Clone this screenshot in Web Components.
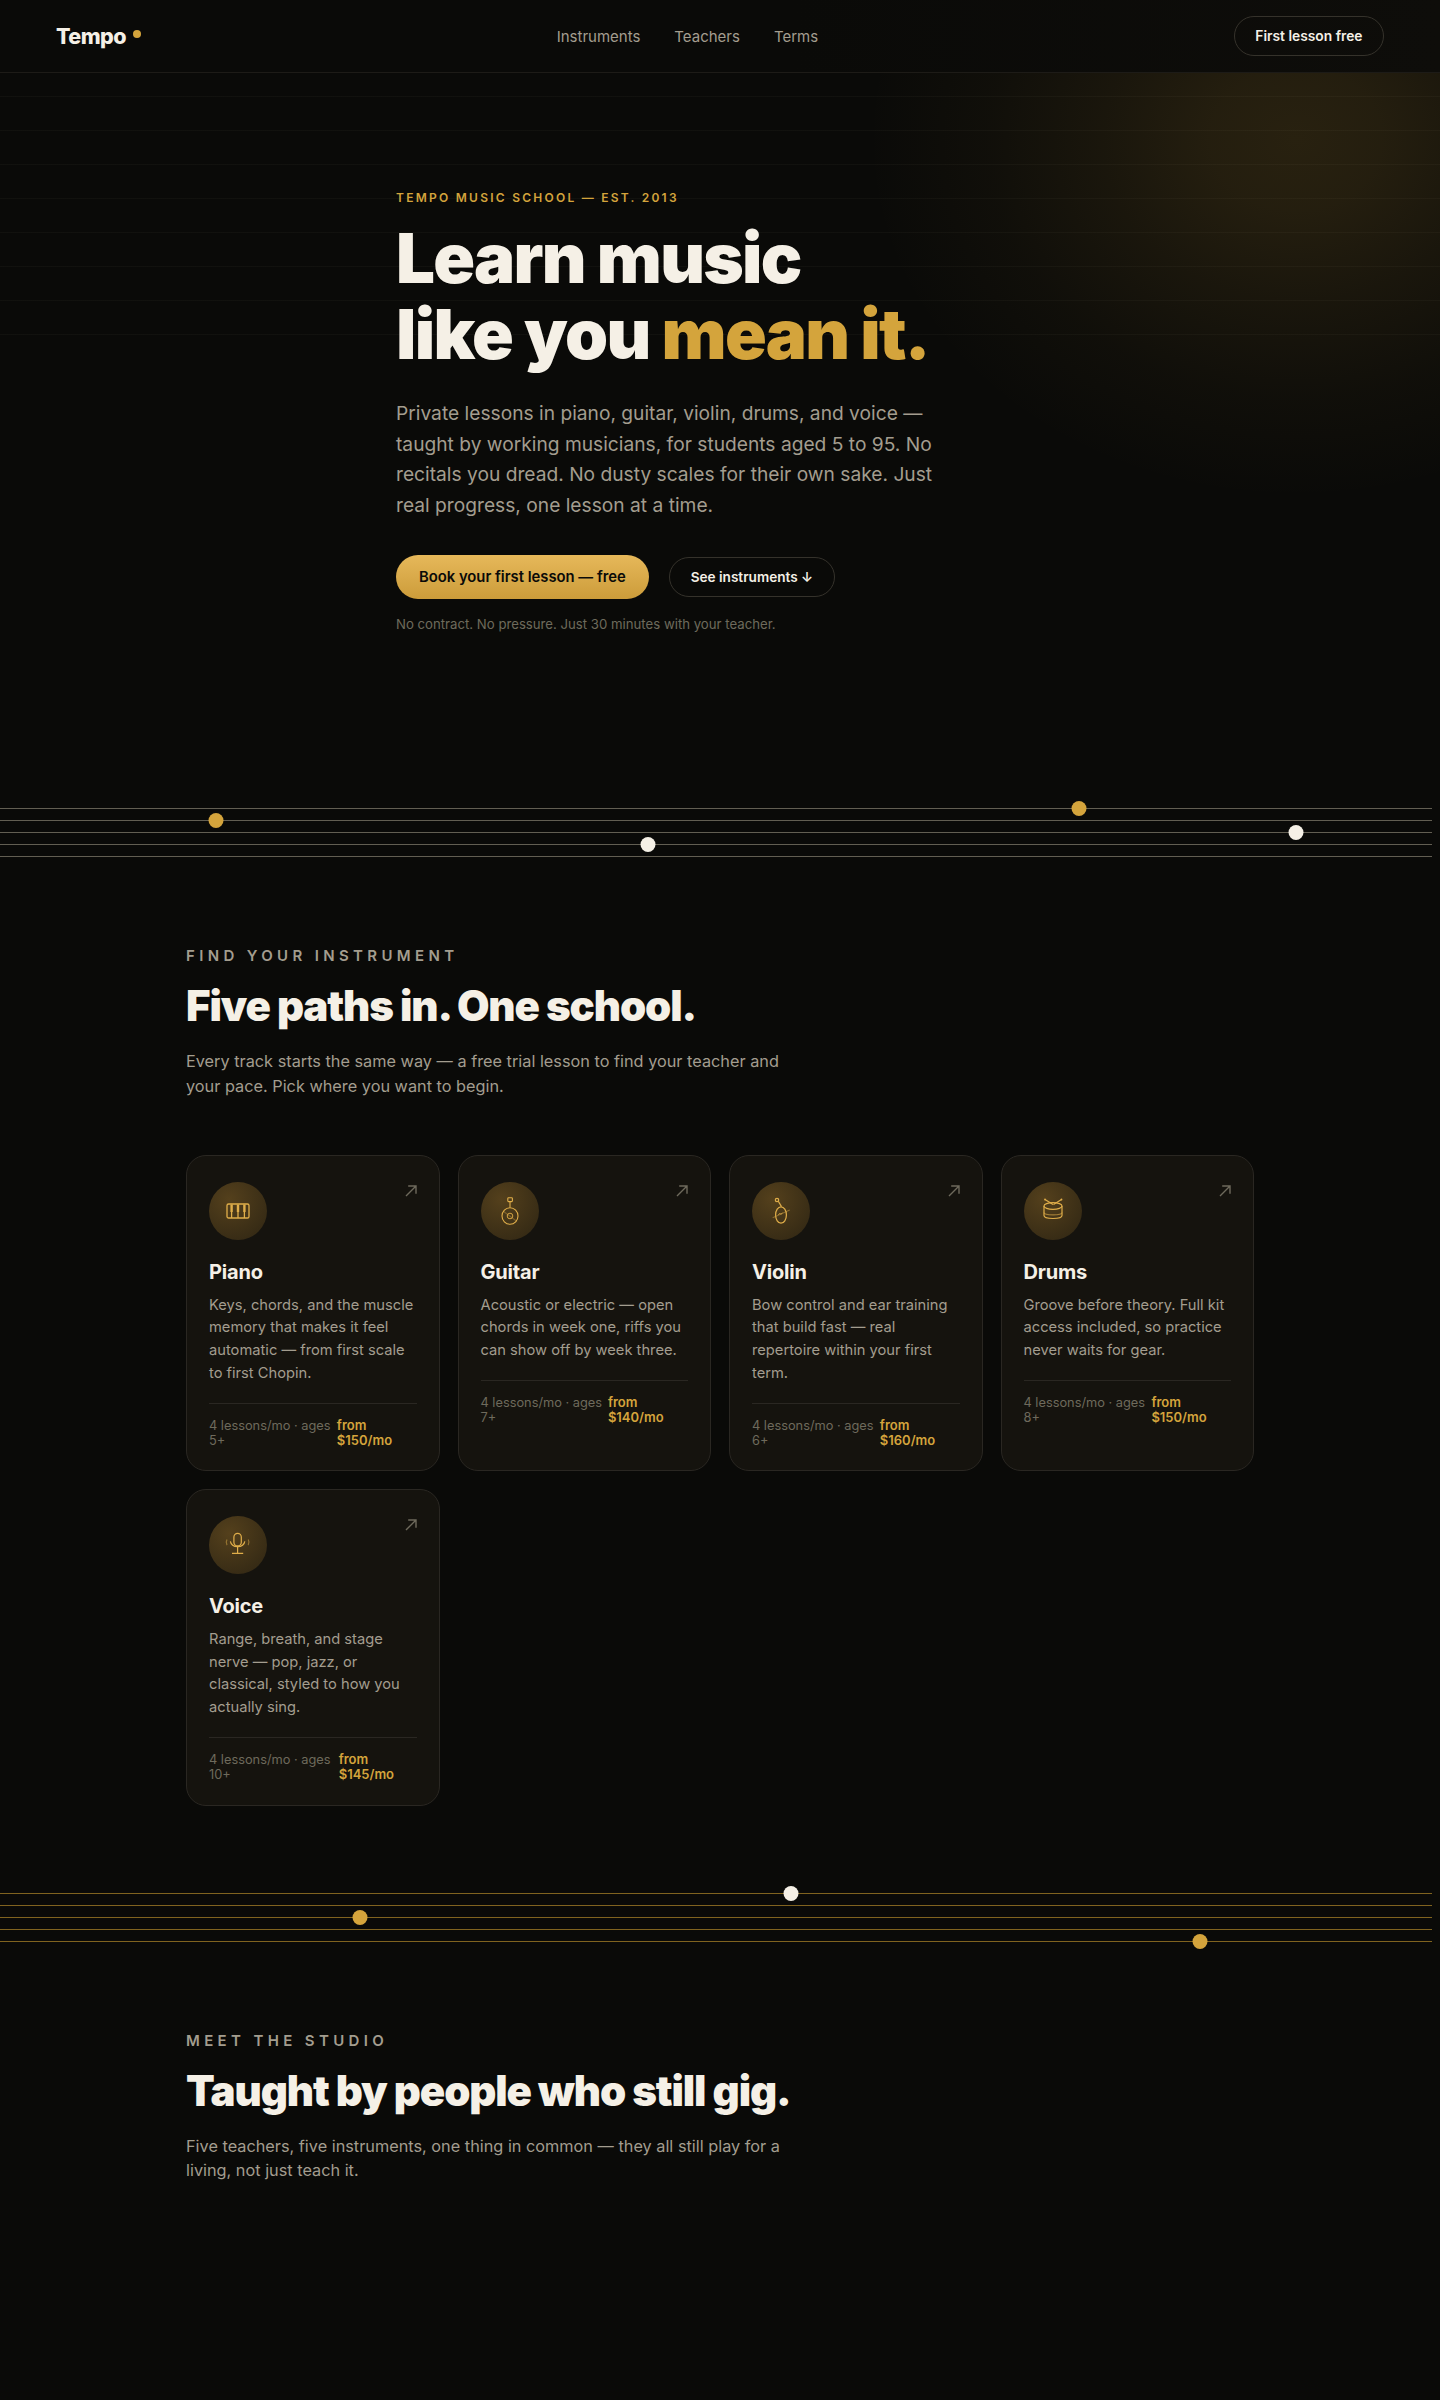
<!DOCTYPE html>
<html lang="en">
<head>
<meta charset="utf-8">
<title>Tempo</title>
<style>
  html, body { margin: 0; background: #0a0a08; }
  body { font-family: Inter, "Liberation Sans", sans-serif; color: #f5f0e6; min-height: 2400px; }
</style>
</head>
<body>
<tempo-nav>
  <a slot="links">Instruments</a>
  <a slot="links">Teachers</a>
  <a slot="links">Terms</a>
</tempo-nav>

<tempo-hero></tempo-hero>

<staff-divider dots="216,1,gold 648,3,cream 1079,0,gold 1296,2,cream" line="#625e52"></staff-divider>

<tempo-section eyebrow="FIND YOUR INSTRUMENT" heading="Five paths in. One school.">
  Every track starts the same way — a free trial lesson to find your teacher and your pace. Pick where you want to begin.
  <instrument-grid slot="body">
    <instrument-card name="Piano" meta="4 lessons/mo · ages 5+" price="from $150/mo">
      <svg slot="icon" width="28" height="28" viewBox="0 0 28 28" fill="none" stroke="#e0ae4a" stroke-width="1.3">
        <rect x="3" y="7" width="22" height="14" rx="1.6"/>
        <path d="M7.6 15v6M14 15v6M20.4 15v6"/>
        <path d="M6.4 7.5h2.4v7.5H6.4zM12.8 7.5h2.4v7.5h-2.4zM19.2 7.5h2.4v7.5h-2.4z" fill="#e0ae4a" stroke="none"/>
      </svg>
      Keys, chords, and the muscle memory that makes it feel automatic — from first scale to first Chopin.
    </instrument-card>
    <instrument-card name="Guitar" meta="4 lessons/mo · ages 7+" price="from $140/mo">
      <svg slot="icon" width="28" height="28" viewBox="0 0 28 28" fill="none" stroke="#e0ae4a" stroke-width="1.1">
        <rect x="11.8" y="0.8" width="4.6" height="3.8" rx="0.8"/>
        <path d="M14 4.6V10.5"/>
        <ellipse cx="14" cy="19" rx="8" ry="8.3"/>
        <circle cx="14" cy="19" r="2.8" stroke-width=".9"/>
        <path d="M7 14l14 10.5" stroke-opacity=".35"/>
      </svg>
      Acoustic or electric — open chords in week one, riffs you can show off by week three.
    </instrument-card>
    <instrument-card name="Violin" meta="4 lessons/mo · ages 6+" price="from $160/mo">
      <svg slot="icon" width="28" height="28" viewBox="0 0 28 28" fill="none" stroke="#e0ae4a" stroke-width="1.2">
        <circle cx="10" cy="3" r="1.7"/>
        <path d="M11.3 4.2L14.5 9.6"/>
        <ellipse cx="14" cy="18" rx="5.4" ry="8.2"/>
        <path d="M11.5 17.5c.8-.2 1-1.2 1.5-1s.3 1 1 .8 .7-1.2 1.4-1.2" stroke-width=".9"/>
        <path d="M5.7 20.7L22.7 13" stroke-opacity=".45"/>
      </svg>
      Bow control and ear training that build fast — real repertoire within your first term.
    </instrument-card>
    <instrument-card name="Drums" meta="4 lessons/mo · ages 8+" price="from $150/mo">
      <svg slot="icon" width="28" height="28" viewBox="0 0 28 28" fill="none" stroke="#e0ae4a" stroke-width="1.2">
        <ellipse cx="14" cy="9" rx="9" ry="3.3"/>
        <path d="M5 9v9.5c0 2 4 3 9 3s9-1 9-3V9"/>
        <path d="M5 15.5c0 1.6 4 2.4 9 2.4s9-.8 9-2.4" stroke-opacity=".6"/>
        <path d="M6 2.5l8 5M22.5 2.5l-8 5"/>
        <circle cx="6" cy="2.5" r=".9" fill="#e0ae4a" stroke="none"/>
        <circle cx="22.5" cy="2.5" r=".9" fill="#e0ae4a" stroke="none"/>
      </svg>
      Groove before theory. Full kit access included, so practice never waits for gear.
    </instrument-card>
    <instrument-card name="Voice" meta="4 lessons/mo · ages 10+" price="from $145/mo">
      <svg slot="icon" width="28" height="28" viewBox="0 0 28 28" fill="none" stroke="#e0ae4a" stroke-width="1.2">
        <rect x="9.9" y="2.3" width="7.4" height="12.6" rx="3.7"/>
        <path d="M6.4 10.3c.6 3.4 3.4 5.3 7.2 5.3s6.6-1.9 7.2-5.3"/>
        <path d="M13.6 15.6V22.3M8 22.3h11.2"/>
        <path d="M3 8.5c-1.2 2-1.2 3.6 0 5.6M24.2 8.5c1.2 2 1.2 3.6 0 5.6" stroke-opacity=".5"/>
      </svg>
      Range, breath, and stage nerve — pop, jazz, or classical, styled to how you actually sing.
    </instrument-card>
  </instrument-grid>
</tempo-section>

<staff-divider dots="360,2,gold 791,0,cream 1200,4,gold" line="#80631f"></staff-divider>

<tempo-section eyebrow="MEET THE STUDIO" heading="Taught by people who still gig.">
  Five teachers, five instruments, one thing in common — they all still play for a living, not just teach it.
</tempo-section>

<script>
class TempoNav extends HTMLElement {
  constructor() {
    super();
    this.attachShadow({ mode: 'open' });
    this.shadowRoot.innerHTML = `
      <style>
        :host { display: flex; justify-content: space-between; align-items: center; height: 72px;
          padding: 0 56px; border-bottom: 1px solid #1d1b17; position: relative; z-index: 2;
          background: linear-gradient(90deg, #0a0a08 55%, #0e0d0a 100%); }
        .logo { font-size: 21.5px; font-weight: 800; letter-spacing: -.025em; color: #f5f0e6; display: flex; align-items: center; gap: 7px; }
        .logo i { width: 8px; height: 8px; border-radius: 50%; background: #d4a43c; margin-top: -5px; }
        nav { display: flex; gap: 34px; font-size: 15px; color: #a39d8f; }
        .cta { height: 40px; box-sizing: border-box; display: flex; align-items: center; padding: 0 20.5px;
          border: 1px solid #35322b; border-radius: 20px; font-size: 13.8px; font-weight: 600; color: #f5f0e6; }
      </style>
      <div class="logo">Tempo<i></i></div>
      <nav><slot name="links"></slot></nav>
      <div class="cta">First lesson free</div>`;
  }
}

class TempoHero extends HTMLElement {
  constructor() {
    super();
    this.attachShadow({ mode: 'open' });
    this.shadowRoot.innerHTML = `
      <style>
        :host { display: block; position: relative; overflow: hidden; height: 727px; box-sizing: border-box; padding: 118px 396px 0; }
        .glow { position: absolute; inset: 0; background: radial-gradient(ellipse 430px 360px at 1296px 66px,
          rgba(212,164,60,.15) 0, rgba(212,164,60,.13) 20%, rgba(212,164,60,.08) 45%, rgba(212,164,60,.03) 72%, rgba(212,164,60,0) 100%); }
        .rules { position: absolute; left: 0; right: 0; top: 23px; height: 239px;
          background: repeating-linear-gradient(180deg, rgba(255,240,200,.03) 0 1px, transparent 1px 34px); }
        .inner { position: relative; width: 600px; }
        .eyebrow { font-size: 12px; font-weight: 600; letter-spacing: .1875em; color: #d4a43c; line-height: 14px; }
        h1 { margin: 15px 0 0; font-size: 69px; line-height: 76px; font-weight: 900; letter-spacing: -.025em; color: #f5f0e6; white-space: nowrap; }
        h1 span { color: #d4a43c; }
        p { margin: 26px 0 0; width: 540px; font-size: 19.2px; line-height: 30.6px; color: #a39d8f; }
        .actions { display: flex; align-items: center; gap: 20px; margin-top: 35px; }
        .primary { height: 44px; display: flex; align-items: center; padding: 0 23px; border-radius: 22px; font-size: 14.8px; font-weight: 600; color: #0a0a08;
          background: linear-gradient(180deg, #e6b85a, #cc9c3a); }
        .secondary { height: 40px; box-sizing: border-box; display: flex; align-items: center; padding: 0 21px; border-radius: 20px; border: 1px solid #35322b;
          font-size: 13.6px; font-weight: 600; color: #f5f0e6; }
        small { display: block; margin-top: 15px; font-size: 13.2px; line-height: 20px; color: #6e6a5c; }
      </style>
      <div class="glow"></div>
      <div class="rules"></div>
      <div class="inner">
        <div class="eyebrow">TEMPO MUSIC SCHOOL — EST. 2013</div>
        <h1>Learn music<br>like you <span>mean it.</span></h1>
        <p>Private lessons in piano, guitar, violin, drums, and voice — taught by working musicians, for students aged 5 to 95. No recitals you dread. No dusty scales for their own sake. Just real progress, one lesson at a time.</p>
        <div class="actions">
          <div class="primary">Book your first lesson — free</div>
          <div class="secondary">See instruments ↓</div>
        </div>
        <small>No contract. No pressure. Just 30 minutes with your teacher.</small>
      </div>`;
  }
}

// five staff lines, dots given as "x,line,colour"
class StaffDivider extends HTMLElement {
  connectedCallback() {
    const line = this.getAttribute('line');
    const colours = { gold: '#d4a43c', cream: '#f5f0e6' };
    let lines = '';
    for (let i = 0; i < 5; i++) {
      lines += `<line x1="0" x2="1432" y1="${8.5 + i * 12}" y2="${8.5 + i * 12}" stroke="${line}" stroke-width="1"/>`;
    }
    const dots = this.getAttribute('dots').split(' ').map(d => {
      const [x, n, c] = d.split(',');
      return `<circle cx="${x}" cy="${8.5 + n * 12}" r="7.5" fill="${colours[c]}"/>`;
    }).join('');
    this.attachShadow({ mode: 'open' });
    this.shadowRoot.innerHTML = `
      <style>:host { display: block; height: 66px; } svg { display: block; }</style>
      <svg width="1440" height="66" viewBox="0 0 1440 66">${lines}${dots}</svg>`;
  }
}

class TempoSection extends HTMLElement {
  connectedCallback() {
    this.attachShadow({ mode: 'open' });
    this.shadowRoot.innerHTML = `
      <style>
        :host { display: block; padding: 80px 186px 79px; }
        .eyebrow { font-size: 15px; line-height: 20px; font-weight: 600; letter-spacing: .29em; color: #a39d8f; }
        h2 { margin: 14px 0 0; font-size: 42px; line-height: 52px; font-weight: 900; letter-spacing: -.027em; color: #f5f0e6; }
        p { margin: 17px 0 0; width: 620px; font-size: 16.3px; line-height: 24.5px; color: #a39d8f; }
      </style>
      <div class="eyebrow">${this.getAttribute('eyebrow')}</div>
      <h2>${this.getAttribute('heading')}</h2>
      <p><slot></slot></p>
      <slot name="body"></slot>`;
  }
}

class InstrumentGrid extends HTMLElement {
  constructor() {
    super();
    this.attachShadow({ mode: 'open' });
    this.shadowRoot.innerHTML = `
      <style>:host { display: grid; grid-template-columns: repeat(4, 1fr); gap: 18px; margin-top: 57px; }</style>
      <slot></slot>`;
  }
}

class InstrumentCard extends HTMLElement {
  connectedCallback() {
    this.attachShadow({ mode: 'open' });
    this.shadowRoot.innerHTML = `
      <style>
        :host { display: flex; flex-direction: column; align-items: stretch; position: relative; box-sizing: border-box; padding: 26px 22px 22.6px;
          background: #15130e; border: 1px solid #2a2722; border-radius: 20px; min-width: 0; }
        .icon { width: 58px; height: 58px; border-radius: 50%; display: flex; align-items: center; justify-content: center;
          background: radial-gradient(circle at 35% 30%, #54401c, #2e2513); }
        .arrow { position: absolute; top: 27px; right: 20px; }
        h3 { margin: 18px 0 0; font-size: 20px; line-height: 28px; font-weight: 700; letter-spacing: -.01em; color: #f5f0e6; }
        p { margin: 7.5px 0 0; font-size: 14.7px; line-height: 22.8px; color: #a39d8f; }
        .meta { display: flex; justify-content: space-between; margin-top: 18px; padding-top: 14px; border-top: 1px solid #2a2722;
          font-size: 12.8px; line-height: 15px; color: #6e6a5c; }
        .price { font-size: 13px; font-weight: 600; color: #d4a43c; }
      </style>
      <svg class="arrow" width="16" height="16" viewBox="0 0 16 16" fill="none" stroke="#6e6a5c" stroke-width="1.4"><path d="M3 13L13 3M5.2 3H13v7.8"/></svg>
      <div class="icon"><slot name="icon"></slot></div>
      <h3>${this.getAttribute('name')}</h3>
      <p><slot></slot></p>
      <div class="meta"><span>${this.getAttribute('meta')}</span><span class="price">${this.getAttribute('price')}</span></div>`;
  }
}

customElements.define('tempo-nav', TempoNav);
customElements.define('tempo-hero', TempoHero);
customElements.define('staff-divider', StaffDivider);
customElements.define('tempo-section', TempoSection);
customElements.define('instrument-grid', InstrumentGrid);
customElements.define('instrument-card', InstrumentCard);
</script>
</body>
</html>
